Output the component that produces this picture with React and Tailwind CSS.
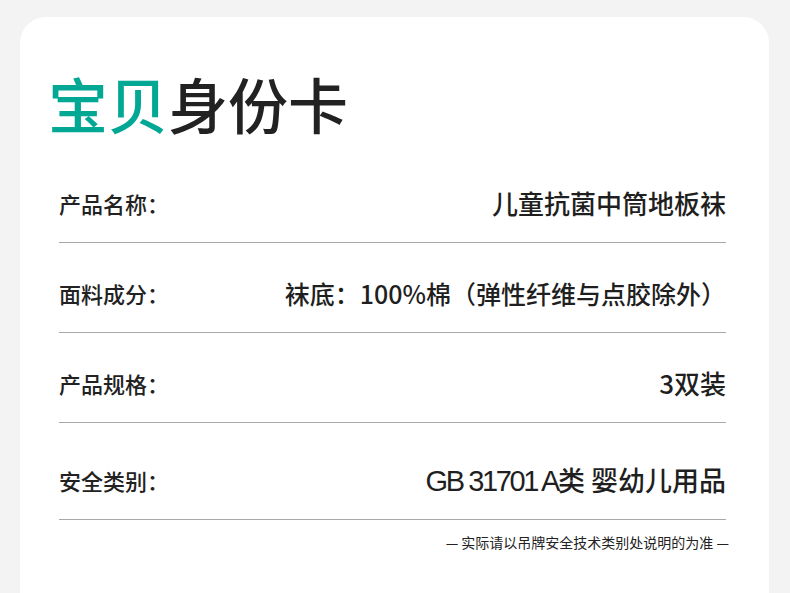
export default function App() {
  const rows = [
    { label: "产品名称：", value: <span className="text-[26px] leading-[36px]">儿童抗菌中筒地板袜</span>, pt: "pt-[32px]" },
    { label: "面料成分：", value: <span className="text-[25px] leading-[36px]">袜底：100%棉（弹性纤维与点胶除外）</span>, pt: "pt-[32px]" },
    { label: "产品规格：", value: <span className="text-[26px] leading-[36px]">3双装</span>, pt: "pt-[32px]" },
    {
      label: "安全类别：",
      value: (
        <span className="text-[27px] leading-[36px]">
          <span
            className="text-[29px] leading-[36px] font-normal tracking-[-2.4px]"
            style={{ fontFamily: '"Liberation Sans", Arial, sans-serif' }}
          >
            GB 31701 A
          </span>
          类 婴幼儿用品
        </span>
      ),
      pt: "pt-[39px]",
    },
  ];
  return (
    <div
      className="h-[593px] w-[790px] overflow-hidden bg-[#f3f3f3] pt-[17px]"
      style={{ fontFamily: '"Noto Sans CJK SC", "Noto Sans", sans-serif' }}
    >
      <div className="ml-[20px] w-[749px] h-[620px] rounded-t-[26px] bg-white pl-[39px] pr-[43px] pt-[56px]">
        <div className="-ml-[11px] text-[60px] leading-[60px] font-medium text-[#222] h-[80px]">
          <span className="text-[#03a895]">宝贝</span>
          <span>身份卡</span>
        </div>
        {rows.map((r) => (
          <div
            key={r.label}
            className={`flex h-[36px] box-content items-center justify-between border-b border-[#a8a8a8] pb-[21px] ${r.pt}`}
          >
            <div className="text-[22px] leading-[36px] font-medium text-[#222]">{r.label}</div>
            <div className="flex h-[36px] items-center font-medium text-[#1f1f1f] whitespace-nowrap">{r.value}</div>
          </div>
        ))}
        <div className="flex justify-end pt-[12px] -mr-[3px]">
          <div className="text-[14px] leading-[20px] text-[#222]">— 实际请以吊牌安全技术类别处说明的为准 —</div>
        </div>
      </div>
    </div>
  );
}
